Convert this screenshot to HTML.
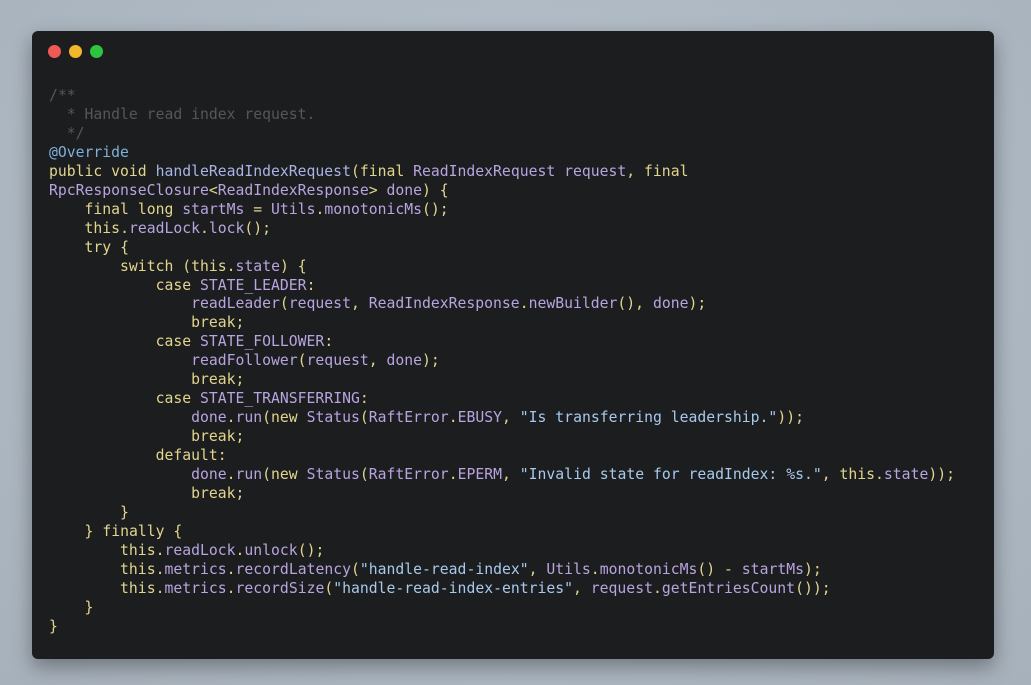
<!DOCTYPE html>
<html><head><meta charset="utf-8"><style>
html,body{margin:0;padding:0;width:1031px;height:685px;overflow:hidden;background:radial-gradient(ellipse at 50% 40%,#b9c3cd 0%,#a7b1bb 100%);}
.win{position:absolute;left:32px;top:31px;width:962px;height:628px;background:#1c1d1f;border-radius:6px;box-shadow:0 8px 20px rgba(0,0,0,.35);}
.dot{position:absolute;top:14px;width:13px;height:13px;border-radius:50%;}
pre{position:absolute;left:17px;top:56px;margin:0;font-family:"DejaVu Sans Mono","Liberation Mono",monospace;font-size:14.75px;line-height:18.96px;color:#b8a4df;}
.c{color:#53575c}.k{color:#e2d58e}.a{color:#7fb0dc}.m{color:#a9b4e6}.s{color:#a8c9ec}.p{color:#e2d58e}
</style></head><body>
<div class="win">
<div class="dot" style="left:16px;background:#f05a55"></div>
<div class="dot" style="left:37px;background:#f3b72c"></div>
<div class="dot" style="left:58px;background:#2dc540"></div>
<pre><span class="c">/**
  * Handle read index request.
  */</span>
<span class="a">@Override</span>
<span class="k">public void</span> <span class="m">handleReadIndexRequest</span><span class="p">(</span><span class="k">final</span> ReadIndexRequest request<span class="p">,</span> <span class="k">final</span>
RpcResponseClosure<span class="p">&lt;</span>ReadIndexResponse<span class="p">&gt;</span> done<span class="p">) {</span>
    <span class="k">final long</span> startMs <span class="p">=</span> Utils<span class="p">.</span>monotonicMs<span class="p">();</span>
    <span class="k">this</span><span class="p">.</span>readLock<span class="p">.</span>lock<span class="p">();</span>
    <span class="k">try</span> <span class="p">{</span>
        <span class="k">switch</span> <span class="p">(</span><span class="k">this</span><span class="p">.</span>state<span class="p">) {</span>
            <span class="k">case</span> STATE_LEADER<span class="p">:</span>
                readLeader<span class="p">(</span>request<span class="p">,</span> ReadIndexResponse<span class="p">.</span>newBuilder<span class="p">(),</span> done<span class="p">);</span>
                <span class="k">break</span><span class="p">;</span>
            <span class="k">case</span> STATE_FOLLOWER<span class="p">:</span>
                readFollower<span class="p">(</span>request<span class="p">,</span> done<span class="p">);</span>
                <span class="k">break</span><span class="p">;</span>
            <span class="k">case</span> STATE_TRANSFERRING<span class="p">:</span>
                done<span class="p">.</span>run<span class="p">(</span><span class="k">new</span> Status<span class="p">(</span>RaftError<span class="p">.</span>EBUSY<span class="p">,</span> <span class="s">"Is transferring leadership."</span><span class="p">));</span>
                <span class="k">break</span><span class="p">;</span>
            <span class="k">default</span><span class="p">:</span>
                done<span class="p">.</span>run<span class="p">(</span><span class="k">new</span> Status<span class="p">(</span>RaftError<span class="p">.</span>EPERM<span class="p">,</span> <span class="s">"Invalid state for readIndex: %s."</span><span class="p">,</span> <span class="k">this</span><span class="p">.</span>state<span class="p">));</span>
                <span class="k">break</span><span class="p">;</span>
        <span class="p">}</span>
    <span class="p">}</span> <span class="k">finally</span> <span class="p">{</span>
        <span class="k">this</span><span class="p">.</span>readLock<span class="p">.</span>unlock<span class="p">();</span>
        <span class="k">this</span><span class="p">.</span>metrics<span class="p">.</span>recordLatency<span class="p">(</span><span class="s">"handle-read-index"</span><span class="p">,</span> Utils<span class="p">.</span>monotonicMs<span class="p">()</span> <span class="p">-</span> startMs<span class="p">);</span>
        <span class="k">this</span><span class="p">.</span>metrics<span class="p">.</span>recordSize<span class="p">(</span><span class="s">"handle-read-index-entries"</span><span class="p">,</span> request<span class="p">.</span>getEntriesCount<span class="p">());</span>
    <span class="p">}</span>
<span class="p">}</span></pre>
</div>
</body></html>
